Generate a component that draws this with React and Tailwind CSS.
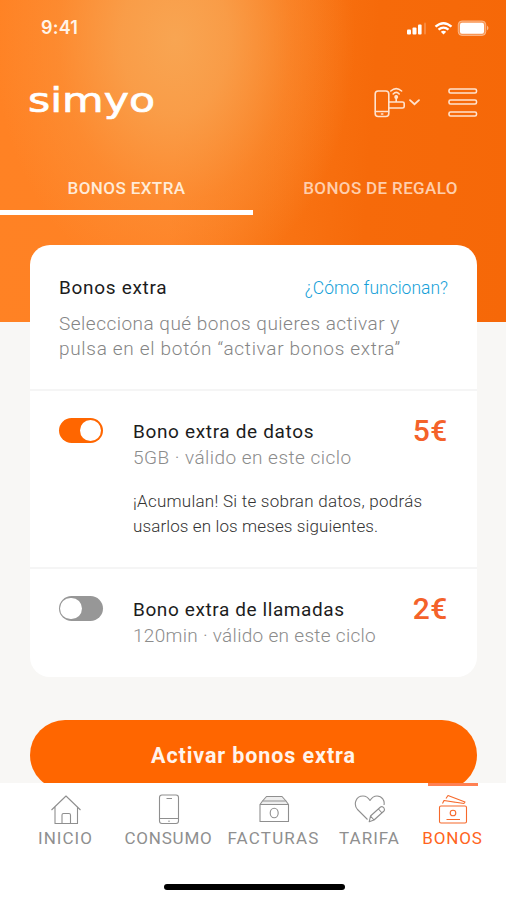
import React from "react";

function StatusIcons() {
  return (
    <svg width="86" height="18" viewBox="0 0 86 18" fill="#fff">
      <rect x="3" y="10.5" width="4" height="5" rx="1" />
      <rect x="8.5" y="8.5" width="4" height="7" rx="1" />
      <rect x="14" y="5.5" width="3.6" height="10" rx="1" />
      <rect x="20" y="3.5" width="2" height="12" rx="1" opacity=".22" />
      <g fill="none" stroke="#fff" strokeWidth="2.3">
        <path d="M31.5 7.7Q39.5 .7 47.5 7.7" />
        <path d="M34.5 10.7Q39.5 6.5 44.5 10.7" />
      </g>
      <path d="M36.8 12.7Q39.5 10.9 42.2 12.7L39.5 15.5Z" />
      <rect x="54.2" y="1.9" width="27.6" height="14.6" rx="3.8" fill="#fff" fillOpacity=".3" stroke="#fff" strokeOpacity=".4" />
      <rect x="56" y="3.7" width="24" height="11" rx="2" />
      <path d="M83 6.5Q86 9 83 11.5Z" opacity=".5" />
    </svg>
  );
}

function Logo() {
  return (
    <svg width="130" height="46" viewBox="0 0 130 46" className="overflow-visible">
      <text x="0" y="32.5" textLength="127" lengthAdjust="spacingAndGlyphs" fontSize="34" fill="#fff" stroke="#fff" strokeWidth=".7" className="font-['DejaVu_Sans',sans-serif]">
        simyo
      </text>
    </svg>
  );
}

function DeviceIcon() {
  return (
    <svg width="48" height="32" viewBox="0 0 48 32" fill="none" stroke="#ffe3cf" strokeWidth="1.6" strokeLinecap="round">
      <rect x="1.2" y="4" width="13.6" height="25.5" rx="3" />
      <path d="M1.5 24.5H14.5M7.5 27H8.8" />
      <path d="M15 15H28.5Q30.2 15 30.2 16.5V19.4Q30.2 21 28.5 21H15M22.2 15V9" />
      <circle cx="22.2" cy="10" r="1.2" fill="#ffe3cf" />
      <path d="M19.2 7Q22.2 3.8 25.2 7M16.8 4Q22.2 -.8 27.6 4" />
      <path d="M36 13.2L40.5 17.2L45 13.2" strokeWidth="1.8" />
    </svg>
  );
}

function MenuIcon() {
  return (
    <svg width="30" height="30" viewBox="0 0 30 30" fill="none" stroke="#ffe3cf" strokeWidth="1.6">
      <rect x="1" y="1" width="27.5" height="4" rx="1.5" />
      <rect x="1" y="12" width="27.5" height="4" rx="1.5" />
      <rect x="1" y="24" width="27.5" height="4" rx="1.5" />
    </svg>
  );
}

const navIcons = {
  inicio: (
    <>
      <path d="M1.5 16L16 2L30.5 16M5 13V29.5H27.5V13" />
      <path d="M12 29V21Q12 19.5 13.5 19.5H19Q20.5 19.5 20.5 21V29" />
    </>
  ),
  consumo: (
    <>
      <rect x="6.5" y="1" width="19" height="28.5" rx="2.5" />
      <path d="M6.5 24.5H25.5M13.5 4.5H19M16 26.5V28" />
    </>
  ),
  facturas: (
    <>
      <path d="M4.5 7L8.5 2.5H24L28 7" fill="#eee" />
      <path d="M2 10.5L4.5 7H28L30.5 10.5" fill="#eee" />
      <rect x="2" y="10.5" width="28.5" height="17" />
      <ellipse cx="16.2" cy="19" rx="4" ry="4.8" />
    </>
  ),
  tarifa: (
    <>
      <path d="M13.5 25.5L3.5 15.5C-1 10 2 2 9 2C12.5 2 14.5 4 16 6.5C17.5 4 20 2 23 2C28 2 31 6.5 30 11" />
      <path d="M15.2 27.8L16.5 22L26.5 13Q28.5 12 30 14Q31 16 30 17L20 26ZM16.5 22L20 26M24.5 15L28 19" />
    </>
  ),
  bonos: (
    <>
      <rect x="2.5" y="12" width="27" height="17" rx="1.5" />
      <circle cx="16" cy="19" r="2.8" />
      <path d="M9.5 25.5H23M5.5 9.5L7 6.5L27 9.5M9 4.5L11 1.5L28 8L27 9.5M7 6.5L18 8.2" />
    </>
  ),
};

function NavItem({ icon, label, className, labelClass, active }) {
  return (
    <div className={`flex flex-col items-center ${className} ${active ? "text-[#f6692b]" : "text-[#8f8f8f]"}`}>
      <div className={`h-[3px] w-[50px] ${active ? "bg-[#ff8052]" : "bg-transparent"}`} />
      <svg width="32" height="31" viewBox="0 0 32 31" fill="none" stroke="currentColor" strokeWidth="1.1" strokeLinejoin="round" className="mt-2">
        {navIcons[icon]}
      </svg>
      <span className={`mt-[3px] text-[17px] leading-5 whitespace-nowrap ${labelClass} ${active ? "text-[#ff6420]" : ""}`}>{label}</span>
    </div>
  );
}

function Toggle({ on }) {
  return (
    <div className={`flex h-[25px] w-[44px] shrink-0 items-center rounded-full ${on ? "justify-end bg-[#ff6600] px-[2px]" : "justify-start bg-[#979797] px-[1px]"}`}>
      <div className="size-[21.5px] rounded-full bg-white" />
    </div>
  );
}

function Bono({ on, title, detail, price, titleClass, detailClass, children }) {
  return (
    <div className="flex border-t-2 border-[#f5f5f5] px-[29px] pt-[27px]">
      <Toggle on={on} />
      <div className="ml-[30px] flex-1">
        <div className="flex h-[26px] justify-between">
          <h3 className={`text-[19px] leading-[27px] whitespace-nowrap text-[#1c1c1c] ${titleClass}`}>{title}</h3>
          <span className="text-[30px] leading-[26px] font-medium tracking-[0.6px] text-[#f4622a]">{price}</span>
        </div>
        <p className={`text-[19px] leading-[28px] font-light whitespace-nowrap text-[#8c8c8c] ${detailClass}`}>{detail}</p>
        {children}
      </div>
    </div>
  );
}

export default function App() {
  return (
    <div className="h-[900px] w-[506px] overflow-hidden bg-white font-[Roboto,sans-serif]">
      <div className="h-[783px] overflow-hidden bg-[#f8f7f5]">
        <header className="h-[322px] bg-[radial-gradient(ellipse_180px_250px_at_175px_40px,#f8a552_0%,#f8a350d0_30%,#fa963f70_65%,#ff822400_100%),linear-gradient(94deg,#ff8224_0%,#ff8124_35%,#f97616_52%,#f66a0a_72%,#f66808_100%)]">
          <div className="flex h-[55px] items-center justify-between pr-[16px] pl-[41px]">
            <span className="font-[Inter,sans-serif] text-[18px] font-semibold tracking-[0.2px] text-[#fff4e8]">9:41</span>
            <StatusIcons />
          </div>
          <div className="flex h-[99px] items-start justify-between pt-[24px] pr-[28px] pl-[28px]">
            <Logo />
            <div className="flex items-center gap-[26px] pt-[8px]">
              <DeviceIcon />
              <MenuIcon />
            </div>
          </div>
          <div className="grid h-[61px] grid-cols-2 text-center text-[17px] leading-[44px] font-medium whitespace-nowrap">
            <div className="border-b-[5px] border-white pt-[12px] text-[#ffebd8]"><span className="tracking-[0.4px]">BONOS EXTRA</span></div>
            <div className="pt-[12px] pl-[2px] text-[#ffceac]"><span className="tracking-[0.35px]">BONOS DE REGALO</span></div>
          </div>
        </header>

        <main className="-mt-[77px] px-[30px]">
          <section className="h-[432px] w-[447px] rounded-[20px] bg-white">
            <div className="h-[144px] px-[29px] pt-[31px]">
              <div className="flex items-center justify-between leading-6">
                <h2 className="text-[19px] tracking-[0.7px] text-[#1c1c1c]">Bonos extra</h2>
                <a className="text-[17.5px] font-light text-[#169fd8]">¿Cómo funcionan?</a>
              </div>
              <p className="mt-3 text-[19px] leading-[24.5px] font-light whitespace-nowrap text-[#858585]">
                <span className="tracking-[0.49px]">Selecciona qué bonos quieres activar y</span>
                <br />
                <span className="tracking-[0.69px]">pulsa en el botón “activar bonos extra”</span>
              </p>
            </div>
            <div className="h-[178px]">
              <Bono on title="Bono extra de datos" detail="5GB · válido en este ciclo" price="5€" titleClass="tracking-[0.65px]" detailClass="tracking-[0.47px]">
                <p className="mt-[17px] text-[17px] leading-[24.5px] font-light whitespace-nowrap text-[#333]">
                  <span className="tracking-[0.25px]">¡Acumulan! Si te sobran datos, podrás</span>
                  <br />
                  <span className="tracking-[0.12px]">usarlos en los meses siguientes.</span>
                </p>
              </Bono>
            </div>
            <Bono title="Bono extra de llamadas" detail="120min · válido en este ciclo" price="2€" titleClass="tracking-[0.6px]" detailClass="tracking-[0.3px]" />
          </section>

          <button className="mt-[43px] h-[70px] w-[447px] rounded-full bg-[#ff6600] pt-[2px] text-[21.5px] font-bold tracking-[0.9px] text-[#fff4ec]">Activar bonos extra</button>
        </main>
      </div>

      <nav className="flex h-[90px] pl-[15px]">
        <NavItem icon="inicio" label="INICIO" className="w-[101px]" labelClass="tracking-[1px]" />
        <NavItem icon="consumo" label="CONSUMO" className="w-[105px]" labelClass="tracking-[0.8px]" />
        <NavItem icon="facturas" label="FACTURAS" className="w-[105px]" labelClass="tracking-[1.2px]" />
        <NavItem icon="tarifa" label="TARIFA" className="w-[87px]" labelClass="tracking-[1px]" />
        <NavItem icon="bonos" label="BONOS" className="w-[79px]" labelClass="tracking-[0.9px]" active />
      </nav>
      <div className="mx-auto mt-[11px] h-[6px] w-[181px] translate-x-[1px] rounded-full bg-black" />
    </div>
  );
}
